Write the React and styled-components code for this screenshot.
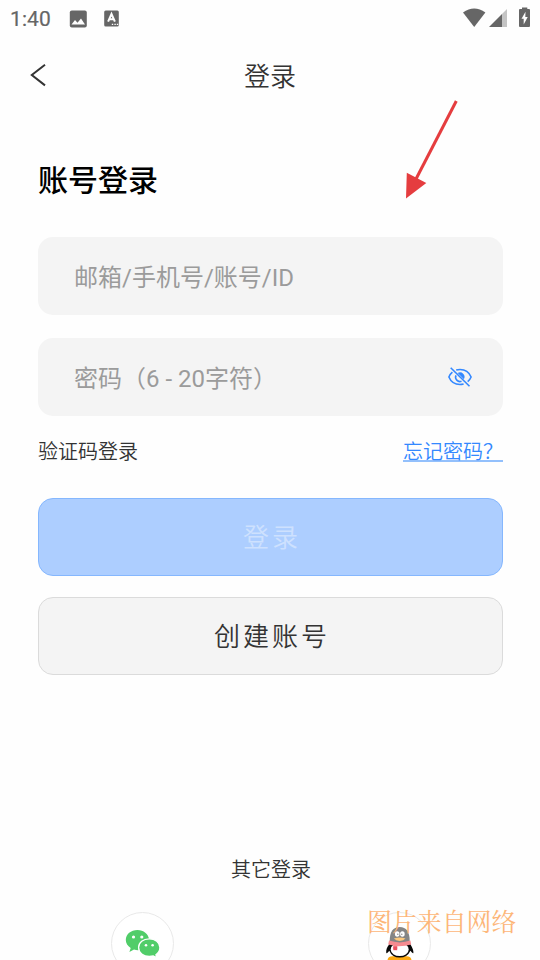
import React, { useState } from "react";
import styled, { createGlobalStyle } from "styled-components";

const GlobalStyle = createGlobalStyle`
  * {
    box-sizing: border-box;
  }

  body {
    margin: 0;
    background: #fefefe;
    font-family: Roboto, "Noto Sans CJK SC", sans-serif;
    font-weight: 350;
    color: #333;
  }
`;

const Screen = styled.div`
  position: relative;
  width: 540px;
  height: 960px;
  overflow: hidden;
  background: #fefefe;
`;

const StatusBar = styled.div`
  display: flex;
  align-items: center;
  height: 37px;
  padding: 0 9px 0 10px;
  color: #666;
  font-size: 21px;
  line-height: 37px;

  svg {
    display: block;
  }
`;

const Clock = styled.span`
  width: 59px;
  padding-top: 1px;
  font-weight: 400;
  letter-spacing: 0.1px;
  -webkit-text-stroke: 0.2px #666;
`;

const Notifications = styled.div`
  display: flex;
  align-items: center;
  gap: 17px;
  flex: 1;
`;

const Signals = styled.div`
  display: flex;
  align-items: center;
  padding-bottom: 2px;
`;

const Header = styled.header`
  display: grid;
  grid-template-columns: 60px 1fr 60px;
  align-items: center;
  height: 76px;
`;

const BackButton = styled.button`
  display: flex;
  padding: 0 0 0 30px;
  border: none;
  background: transparent;
  cursor: pointer;
`;

const PageTitle = styled.h1`
  margin: 0;
  padding-top: 3px;
  font-size: 26px;
  font-weight: 350;
  line-height: 38px;
  text-align: center;
`;

const Form = styled.form`
  display: flex;
  flex-direction: column;
  padding: 46px 37px 0 38px;
`;

const FormTitle = styled.h2`
  margin: 0 0 34px;
  color: #000;
  font-size: 30px;
  font-weight: 500;
  line-height: 44px;
`;

const Field = styled.label`
  display: flex;
  align-items: center;
  height: 78px;
  margin-bottom: ${(props) => props.$gap};
  padding: 0 30px 0 36px;
  border-radius: 15px;
  background: #f4f4f4;
`;

const Input = styled.input`
  flex: 1;
  min-width: 0;
  height: 44px;
  padding: 4px 0 0;
  border: none;
  outline: none;
  background: transparent;
  color: #333;
  font-family: inherit;
  font-size: 24px;
  font-weight: 400;

  &::placeholder {
    color: #9b9b9b;
    opacity: 1;
  }
`;

const EyeButton = styled.button`
  display: flex;
  padding: 0;
  border: none;
  background: transparent;
  cursor: pointer;
`;

const Options = styled.div`
  display: flex;
  justify-content: space-between;
  height: 30px;
  margin-bottom: 32px;
  font-size: 20px;
  line-height: 32px;
`;

const ForgotLink = styled.a`
  height: 26px;
  border-bottom: 2px solid #93c0fc;
  color: #3388ff;
  text-decoration: none;
`;

const Button = styled.button`
  height: 78px;
  margin-bottom: 21px;
  padding: 0 0 3px 3px;
  border: 1.5px solid ${(props) => (props.$primary ? "#85b7fe" : "#dbdbdb")};
  border-radius: 15px;
  background: ${(props) => (props.$primary ? "#adceff" : "#f4f4f4")};
  color: ${(props) => (props.$primary ? "#cee1fe" : "#333")};
  font-family: inherit;
  font-size: 26px;
  font-weight: 350;
  letter-spacing: 3px;
`;

const Others = styled.section`
  padding-top: 159px;
`;

const OthersTitle = styled.p`
  margin: 0 0 27px;
  padding-left: 2px;
  font-size: 20px;
  line-height: 30px;
  text-align: center;
`;

const Providers = styled.div`
  display: flex;
  gap: 194px;
  padding-left: 111px;
`;

const Provider = styled.button`
  display: flex;
  flex: none;
  align-items: center;
  justify-content: center;
  width: 63px;
  height: 63px;
  padding: 0;
  border: 1px solid #e9e9e9;
  border-radius: 50%;
  background: #fff;
`;

const Pointer = styled.svg`
  position: absolute;
  left: 400px;
  top: 95px;
`;

const Watermark = styled.span`
  position: absolute;
  left: 367px;
  top: 902px;
  color: #fdb678;
  font-family: "Noto Serif CJK SC", "Noto Sans CJK SC", serif;
  font-size: 24.9px;
  font-weight: 400;
  line-height: 37px;
  white-space: nowrap;
`;

const ImageIcon = () => (
  <svg width="18" height="18" viewBox="0 0 18 18">
    <rect x="0.8" y="0.5" width="17" height="17" rx="2" fill="#666" />
    <path d="M2.5 14.5 6 10l2.5 2.8L12 8.5l4 6Z" fill="#fefefe" />
  </svg>
);

const KeyboardIcon = () => (
  <svg width="16" height="17" viewBox="0 0 16 17">
    <rect x="0.2" y="0.5" width="14.6" height="16" rx="1.5" fill="#666" />
    <path d="M4.1 11.7 7.5 4l3.4 7.7M5.3 9.3h4.4" fill="none" stroke="#fefefe" strokeWidth="2" />
    <path d="M7.8 14.3h1.4M10.4 14.3h1.4M12.8 14.3h1.4" stroke="#fefefe" strokeWidth="1.3" />
  </svg>
);

const SignalIcons = () => (
  <svg width="68" height="22" viewBox="0 0 68 22" fill="#666">
    <path d="M0 5.4Q11.2-2.2 22.4 5.4L11.2 20Z" />
    <path d="M26 20 39 7.1V20Z" />
    <path d="M39 7.1 44 2v18h-5Z" fill="#c4c4c4" />
    <path d="M59 .5h5.3V2H66q1 0 1 1v16q0 1-1 1h-9q-1 0-1-1V3q0-1 1-1h2Z" />
    <path d="m62.5 4.8-4 7h2.2v5.6l4-7.4h-2.4Z" fill="#fefefe" />
  </svg>
);

const BackIcon = () => (
  <svg width="16" height="24" viewBox="0 0 16 24">
    <path d="M15 1.8 1.8 12 15 22.4" fill="none" stroke="#333" strokeWidth="2" />
  </svg>
);

const EyeOffIcon = () => (
  <svg width="26" height="22" viewBox="0 0 26 22" fill="none" stroke="#3388ff" strokeWidth="1.6">
    <path d="M9.2 4.1Q11 3.5 13 3.5C18 3.5 22.2 6.4 24.1 11Q22.9 13.9 20.7 15.7" />
    <path d="M5.4 6.2Q3.1 8.1 1.9 11C3.8 15.6 8 18.5 13 18.5Q14.8 18.5 16.6 18" />
    <path d="M10.7 7.1a4.5 4.5 0 0 1 6.2 6.1Z" fill="#3388ff" stroke="none" />
    <path d="M9 9.4a4.3 4.3 0 0 0 5.5 5.8" />
    <path d="m3.7 1.8 18.8 18.5" />
  </svg>
);

const WechatIcon = () => (
  <svg width="36" height="30" viewBox="0 0 36 30" fill="#51cd69">
    <path d="M12.5 1C5.9 1 .8 5.3.8 11.1c0 3.3 1.8 6.1 4.9 7.9l-1.3 4 4.6-2.4q2.9.9 5.5.5C22.1 20.1 24.5 15.8 24 10 23.4 5 18.6 1 12.5 1Z" />
    <path d="M24.3 9.8c-6.1 0-10.7 3.8-10.7 8.8s4.6 8.9 10.7 8.9q2.1 0 4-.5l3.5 1.9-.9-3.2c2.4-1.6 4-4.1 4-7.1 0-5-4.8-8.8-10.6-8.8Z" stroke="#fff" strokeWidth="1.3" />
    <g fill="#fff">
      <circle cx="8.5" cy="8" r="1.6" />
      <circle cx="16.8" cy="8" r="1.6" />
      <circle cx="21" cy="16.3" r="1.3" />
      <circle cx="27.6" cy="16.3" r="1.3" />
    </g>
  </svg>
);

const QqIcon = () => (
  <svg width="30" height="36" viewBox="0 0 30 36">
    <path d="M2.5 34.5q0-4.3 5-4.3h14q5 0 5 4.3-2 1.5-12 1.5t-12-1.5Z" fill="#fca911" />
    <path d="M4.5 18C2 21 .8 24 1.3 27q.8.8 3-2.2Q7 31.6 14.7 31.6T25.4 24.8q2.2 3 3 2.2.5-3-3.2-9Z" fill="#080808" />
    <ellipse cx="14.7" cy="23.5" rx="9" ry="6.6" fill="#fff" />
    <path d="M4.7 15C4.7 5.8 8 1 14.7 1s10 4.8 10 14v3h-20Z" fill="#858585" />
    <ellipse cx="12.2" cy="8" rx="2.3" ry="2.8" fill="#fff" />
    <ellipse cx="17.4" cy="8" rx="2.3" ry="2.8" fill="#fff" />
    <circle cx="12.8" cy="8.2" r="0.7" fill="#888" />
    <circle cx="16.8" cy="8.2" r="0.7" fill="#888" />
    <path d="M8.9 12.6q5.8-2 11.6 0-1.8 2.4-5.8 2.4t-5.8-2.4" fill="#fcc87d" />
    <path d="M4 14.6q10.7 3.6 21.4 0l.8 4q-6.7 2-14 1.7V23H8.3v-3.6q-2.6-.3-5.1-1Z" fill="#f68b90" />
    <path d="M8.3 20.5h3.9v3.7H8.3Z" fill="#ea5160" />
  </svg>
);

const App = () => {
  const [account, setAccount] = useState("");
  const [password, setPassword] = useState("");
  const [visible, setVisible] = useState(false);

  const handleLogin = (e) => {
    e.preventDefault();
  };

  return (
    <>
      <GlobalStyle />
      <Screen>
        <StatusBar>
          <Clock>1:40</Clock>
          <Notifications>
            <ImageIcon />
            <KeyboardIcon />
          </Notifications>
          <Signals>
            <SignalIcons />
          </Signals>
        </StatusBar>

        <Header>
          <BackButton type="button">
            <BackIcon />
          </BackButton>
          <PageTitle>登录</PageTitle>
        </Header>

        <Form onSubmit={handleLogin}>
          <FormTitle>账号登录</FormTitle>
          <Field $gap="23px">
            <Input
              type="text"
              placeholder="邮箱/手机号/账号/ID"
              value={account}
              onChange={(e) => setAccount(e.target.value)}
            />
          </Field>
          <Field $gap="20px">
            <Input
              type={visible ? "text" : "password"}
              placeholder="密码（6 - 20字符）"
              value={password}
              onChange={(e) => setPassword(e.target.value)}
            />
            <EyeButton type="button" onClick={() => setVisible(!visible)}>
              <EyeOffIcon />
            </EyeButton>
          </Field>
          <Options>
            <span>验证码登录</span>
            <ForgotLink href="#">忘记密码？</ForgotLink>
          </Options>
          <Button type="submit" $primary>登录</Button>
          <Button type="button">创建账号</Button>
        </Form>

        <Others>
          <OthersTitle>其它登录</OthersTitle>
          <Providers>
            <Provider type="button">
              <WechatIcon />
            </Provider>
            <Provider type="button">
              <QqIcon />
            </Provider>
          </Providers>
        </Others>

        <Pointer width="62" height="110" viewBox="0 0 62 110">
          <path d="M56.3 6 16 84" stroke="#e53d3f" strokeWidth="3" />
          <path d="M6.8 77.8 26.3 88 6 103.5Z" fill="#e53d3f" />
        </Pointer>
        <Watermark>图片来自网络</Watermark>
      </Screen>
    </>
  );
};

export default App;
